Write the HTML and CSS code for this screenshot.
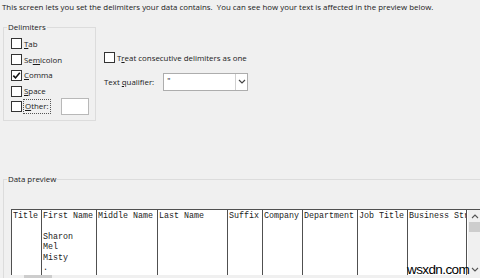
FILE: index.html
```html
<!DOCTYPE html>
<html lang="en">
<head>
    <meta charset="UTF-8">
    <title>Text Import Wizard</title>
    <link rel="stylesheet" href="styles.css">
</head>
<body>
    <p class="intro">This screen lets you set the delimiters your data contains.&nbsp; You can see how your text is affected in the preview below.</p>

    <div class="options">
        <fieldset class="group delimiters">
            <legend>Delimiters</legend>
            <div class="check-row"><span class="box"></span><span><u>T</u>ab</span></div>
            <div class="check-row"><span class="box"></span><span>Se<u>m</u>icolon</span></div>
            <div class="check-row"><span class="box checked"><svg viewBox="0 0 9 9" width="9" height="9"><path d="M1.3 4.6 L3.5 6.9 L7.8 1.8" fill="none" stroke="#111" stroke-width="1.6"/></svg></span><span><u>C</u>omma</span></div>
            <div class="check-row"><span class="box"></span><span><u>S</u>pace</span></div>
            <div class="check-row"><span class="box"></span><span class="focus"><u>O</u>ther:</span><span class="other-input"></span></div>
        </fieldset>

        <div class="side">
            <div class="check-row"><span class="box"></span><span>T<u>r</u>eat consecutive delimiters as one</span></div>
            <div class="qualifier">
                <span>Text <u>q</u>ualifier:</span>
                <div class="select">
                    <span class="value">"</span>
                    <span class="drop"><svg viewBox="0 0 8 5" width="8" height="5"><path d="M1 1 L4 4 L7 1" fill="none" stroke="#444" stroke-width="1.2"/></svg></span>
                </div>
            </div>
        </div>
    </div>

    <fieldset class="group preview">
        <legend>Data preview</legend>
        <div class="grid-wrap">
            <div class="grid">
                <div class="col" style="width:30px">Title</div>
                <div class="col" style="width:55px">First Name<br><br>Sharon<br>Mel<br>Misty<br>.</div>
                <div class="col" style="width:61px">Middle Name</div>
                <div class="col" style="width:70px">Last Name</div>
                <div class="col" style="width:35px">Suffix</div>
                <div class="col" style="width:40px">Company</div>
                <div class="col" style="width:55px">Department</div>
                <div class="col" style="width:50px">Job Title</div>
                <div class="col" style="width:59px">Business Str</div>
            </div>
            <div class="vscroll">
                <svg class="arrow" viewBox="0 0 8 5" width="8" height="5"><path d="M1 4 L4 1 L7 4" fill="none" stroke="#555" stroke-width="1.1"/></svg>
                <div class="vthumb"></div>
                <div class="vspace"></div>
                <svg class="arrow" viewBox="0 0 8 5" width="8" height="5"><path d="M1 1 L4 4 L7 1" fill="none" stroke="#555" stroke-width="1.1"/></svg>
            </div>
        </div>
        <div class="hscroll"><div class="hthumb"></div></div>
        <span class="watermark">wsxdn.com</span>
    </fieldset>
</body>
</html>
```

FILE: styles.css
```css
* {
    box-sizing: border-box;
}
body {
    margin: 0;
    width: 480px;
    height: 278px;
    overflow: hidden;
    background-color: #f0f0f0;
    color: #1a1a1a;
    font-family: 'Open Sans', 'Noto Sans', sans-serif;
    font-size: 7.9px;
}
u {
    text-decoration-thickness: 1px;
    text-underline-offset: 1px;
}
.intro {
    margin: 0;
    padding: 1px 2px;
    line-height: 12px;
    white-space: nowrap;
}
/* Options area */
.options {
    display: flex;
    margin-top: 7px;
}
.group {
    margin: 0;
    border: 1px solid #dcdcdc;
}
.group legend {
    padding: 0 1px;
    margin-left: -4px;
    line-height: 12px;
}
.delimiters {
    margin-left: 3px;
    width: 93px;
    height: 100px;
    padding: 3px 0 0 7px;
}
.check-row {
    display: flex;
    align-items: center;
    gap: 2px;
    height: 15.75px;
}
.box {
    width: 11px;
    height: 11px;
    border: 1px solid #333;
    background-color: #fff;
    display: flex;
    align-items: center;
    justify-content: center;
}
.focus {
    outline: 1px dotted #555;
    padding: 0 1px;
    line-height: 13px;
}
.other-input {
    width: 28px;
    height: 17px;
    margin-left: 9px;
    border: 1px solid #b8b8b8;
    background-color: #fff;
}
.side {
    margin-left: 8px;
    padding-top: 29px;
}
.qualifier {
    display: flex;
    align-items: center;
    margin-top: 7px;
}
.select {
    display: flex;
    width: 85px;
    height: 18px;
    margin-left: 9px;
    border: 1px solid #adadad;
    background-color: #fff;
}
.select .value {
    flex: 1;
    padding: 1px 3px;
    line-height: 10px;
}
.select .drop {
    width: 12px;
    border-left: 1px solid #d0d0d0;
    display: flex;
    align-items: center;
    justify-content: center;
}
/* Data preview */
.preview {
    position: relative;
    margin: 52px 0 0 3px;
    width: 500px;
    height: 120px;
    border-right: none;
    padding: 24px 0 0 7px;
}
.grid-wrap {
    display: flex;
    width: 470px;
    height: 66px;
    background-color: #fff;
    border-top: 1px solid #505050;
    border-left: 1px solid #505050;
}
.grid {
    display: flex;
    flex: 1;
    overflow: hidden;
}
.col {
    flex: none;
    border-right: 1px solid #505050;
    padding: 1px 0 0 1px;
    font-family: 'Liberation Mono', 'Courier New', monospace;
    font-size: 8.33px;
    line-height: 10.4px;
    white-space: nowrap;
    overflow: hidden;
    color: #222;
}
.vscroll {
    width: 13px;
    display: flex;
    flex-direction: column;
    align-items: center;
    background-color: #f0f0f0;
    padding: 4px 0 3px;
}
.vthumb {
    width: 12px;
    height: 10px;
    margin-top: 3px;
    background-color: #cdcdcd;
}
.vspace {
    flex: 1;
}
.hscroll {
    height: 4px;
    padding-left: 13px;
}
.hthumb {
    width: 28px;
    height: 4px;
    background-color: #cdcdcd;
}
.watermark {
    position: absolute;
    left: 403px;
    top: 77px;
    font-family: 'Liberation Sans', Arial, sans-serif;
    font-size: 13.5px;
    letter-spacing: -0.6px;
    color: #000;
}
```
